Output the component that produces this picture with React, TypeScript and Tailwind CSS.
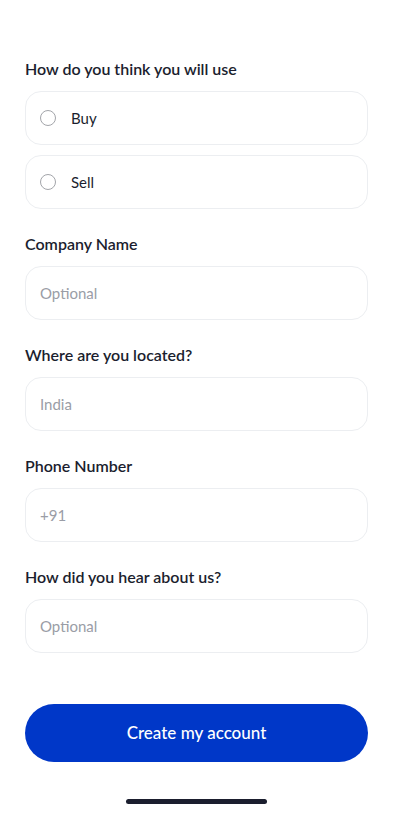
import React, { useState } from 'react';

type Usage = 'buy' | 'sell' | null;

const font = { fontFamily: 'Lato, "Noto Sans", sans-serif' };

const Label: React.FC<{ children: React.ReactNode }> = ({ children }) => (
  <div className="text-[16px] leading-[22px] font-semibold text-[#1b1e2e]">{children}</div>
);

const Field: React.FC<{ label: string; placeholder: string }> = ({ label, placeholder }) => (
  <div>
    <Label>{label}</Label>
    <input
      placeholder={placeholder}
      className="mt-[11px] block h-[54px] w-full rounded-[16px] border border-[#eceef1] bg-white px-[14px] text-[15px] text-[#1b1e2e] outline-none placeholder:text-[#9a9da6]"
      style={font}
    />
  </div>
);

export default function App() {
  const [usage, setUsage] = useState<Usage>(null);

  const options: { id: Exclude<Usage, null>; text: string }[] = [
    { id: 'buy', text: 'Buy' },
    { id: 'sell', text: 'Sell' },
  ];

  return (
    <div className="flex min-h-[814px] flex-col bg-white px-[25px] pt-[58px]" style={font}>
      <div className="flex flex-col gap-[24px]">
        <div>
          <Label>How do you think you will use</Label>
          <div className="mt-[11px] flex flex-col gap-[10px]">
            {options.map((opt) => (
              <button
                key={opt.id}
                onClick={() => setUsage(opt.id)}
                className="flex h-[54px] w-full items-center rounded-[16px] border border-[#eceef1] bg-white px-[14px] text-left"
              >
                <span className="flex h-[16px] w-[16px] items-center justify-center rounded-full border border-[#a3a5aa]">
                  {usage === opt.id && <span className="h-[8px] w-[8px] rounded-full bg-[#0037c8]" />}
                </span>
                <span className="ml-[15px] text-[15px] text-[#1b1e2e]">{opt.text}</span>
              </button>
            ))}
          </div>
        </div>

        <Field label="Company Name" placeholder="Optional" />
        <Field label="Where are you located?" placeholder="India" />
        <Field label="Phone Number" placeholder="+91" />
        <Field label="How did you hear about us?" placeholder="Optional" />
      </div>

      <button className="mt-[51px] h-[58px] w-full rounded-full bg-[#0037c8] text-[17px] font-medium text-white">
        Create my account
      </button>

      <div className="mt-[37px] flex justify-center">
        <div className="h-[5px] w-[141px] rounded-full bg-[#1b1e2e]" />
      </div>
    </div>
  );
}
